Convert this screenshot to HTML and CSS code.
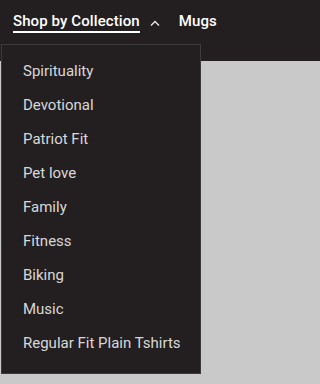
FILE: index.html
```html
<!DOCTYPE html>
<html>
<head>
<meta charset="utf-8">
<link rel="stylesheet" href="styles.css">
</head>
<body>
<header class="header">
  <nav class="nav">
    <div class="nav-item">
      <span class="nav-link active">Shop by Collection</span>
      <svg class="caret" width="10" height="7" viewBox="0 0 10 7"><path d="M1 5.5 L5 1.5 L9 5.5" fill="none" stroke="#e8e8e8" stroke-width="1.4"/></svg>
    </div>
    <div class="nav-item">
      <span class="nav-link">Mugs</span>
    </div>
  </nav>
</header>
<main class="page"></main>
<ul class="dropdown">
  <li class="dd-item">Spirituality</li>
  <li class="dd-item">Devotional</li>
  <li class="dd-item">Patriot Fit</li>
  <li class="dd-item">Pet love</li>
  <li class="dd-item">Family</li>
  <li class="dd-item">Fitness</li>
  <li class="dd-item">Biking</li>
  <li class="dd-item">Music</li>
  <li class="dd-item">Regular Fit Plain Tshirts</li>
</ul>
</body>
</html>
```

FILE: styles.css
```css
html, body {
  margin: 0;
  padding: 0;
  height: 100%;
  overflow: hidden;
}
body {
  font-family: Roboto, "Liberation Sans", sans-serif;
  background: #c9c9c9;
  position: relative;
  height: 384px;
}
.header {
  background: #231f20;
  height: 61px;
  box-sizing: border-box;
  padding: 12px 0 0 13px;
}
.nav {
  display: flex;
  white-space: nowrap;
  gap: 19px;
}
.nav-item {
  display: flex;
  align-items: flex-start;
  gap: 10px;
}
.nav-link {
  display: inline-block;
  font-size: 15px;
  font-weight: 500;
  letter-spacing: 0.1px;
  line-height: 19px;
  color: #ffffff;
  border-bottom: 2px solid transparent;
}
.nav-link.active {
  border-bottom-color: #ffffff;
}
.caret {
  margin-top: 8px;
}
.page {
  height: 323px;
}
.dropdown {
  position: absolute;
  left: 1px;
  top: 44px;
  width: 200px;
  height: 330px;
  box-sizing: border-box;
  margin: 0;
  padding: 9px 0 0 21px;
  list-style: none;
  background: #231f20;
  border: 1px solid #3d3a3b;
}
.dd-item {
  font-size: 15px;
  font-weight: 400;
  line-height: 34px;
  color: #d8d8d8;
  white-space: nowrap;
}
```
